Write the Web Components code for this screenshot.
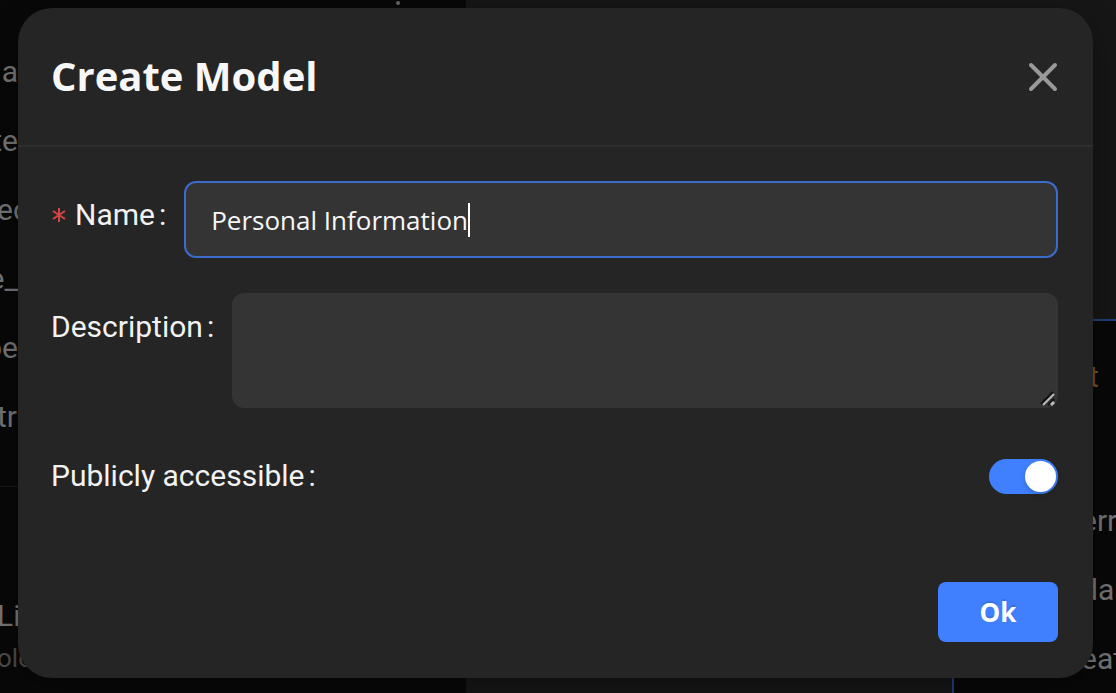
<!DOCTYPE html>
<html lang="en">
<head>
<meta charset="utf-8">
<meta name="viewport" content="width=device-width, initial-scale=1">
<title>Create Model</title>
<style>
  html, body { margin: 0; min-height: 100%; background: #080808; color: #f2f2f2; font-family: Roboto, "Liberation Sans", sans-serif; overflow: hidden; }
</style>
</head>
<body>
<model-page></model-page>

<template id="page-tpl">
  <style>
    :host { display: block; position: relative; overflow: hidden; min-height: 100vh; box-sizing: border-box; padding: 8px 23px 15px 18px; }
    page-backdrop { position: absolute; inset: 0; }
    modal-dialog { position: relative; }
  </style>
  <page-backdrop></page-backdrop>
  <modal-dialog heading="Create Model">
    <text-field label="Name" value="Personal Information"></text-field>
    <area-field label="Description"></area-field>
    <switch-field label="Publicly accessible"></switch-field>
    <primary-button slot="footer">Ok</primary-button>
  </modal-dialog>
</template>

<template id="backdrop-tpl">
  <style>
    :host { display: grid; grid-template-columns: 466px 1fr; background: #161616; font-size: 30px; line-height: 36px; color: #747474; overflow: hidden; }
    aside { background: #080808; display: flex; flex-direction: column; overflow: hidden; }
    .dot { width: 4px; height: 4px; border-radius: 50%; background: #666; margin-left: 396px; margin-top: 1px; }
    ul { list-style: none; margin: 0 0 0 -3px; padding: 49px 0 0; display: flex; flex-direction: column; gap: 33px; }
    li { display: flex; width: 21px; white-space: nowrap; }
    li.end { justify-content: flex-end; }
    .rest { margin-top: 51px; border-top: 1px solid #1a1a1a; padding-top: 111px; }
    .rest div { white-space: nowrap; margin-left: -3px; }
    .rest .sub { font-size: 26px; color: #4b4b4b; margin-top: 6px; }
    main { display: flex; justify-content: flex-end; padding-top: 319px; }
    section { box-sizing: border-box; width: 164px; background: #080808; border: 2px solid #223d78; border-right: 0; border-bottom: 0; padding: 38px 0 0 127px; }
    section div { white-space: nowrap; margin-bottom: 33px; }
    section .type { color: #735018; padding-left: 8px; margin-bottom: 108px; }
  </style>
  <aside>
    <div class="dot"></div>
    <ul>
      <li class="end">a</li>
      <li class="end">te</li>
      <li>ec</li>
      <li class="end">e_</li>
      <li class="end">pe</li>
      <li>tra</li>
    </ul>
    <div class="rest">
      <div>Li</div>
      <div class="sub">olo</div>
    </div>
  </aside>
  <main>
    <section>
      <div class="type">t</div>
      <div>err</div>
      <div>da</div>
      <div>eat</div>
    </section>
  </main>
</template>

<template id="dialog-tpl">
  <style>
    :host { display: block; background: #252525; border-radius: 34px; box-shadow: 0 10px 30px rgba(0,0,0,.3); }
    header { display: flex; justify-content: space-between; align-items: center; height: 137px; padding: 0 34px 0 33px; border-bottom: 2px solid #2f2f2f; box-sizing: content-box; }
    h1 { margin: 0; padding-bottom: 2px; font: 700 40px/56px "Open Sans", "Noto Sans", sans-serif; color: #f7f7f7; }
    button { border: 0; padding: 0; background: none; display: flex; }
    svg { width: 32px; height: 32px; display: block; }
    .body { display: flex; flex-direction: column; padding: 34px 35px 0 33px; }
    footer { display: flex; justify-content: flex-end; padding: 88px 35px 36px; }
  </style>
  <header>
    <h1></h1>
    <button type="button" aria-label="Close">
      <svg viewBox="0 0 32 32"><path d="M4 4L28 28M28 4L4 28" fill="none" stroke="#999" stroke-width="4" stroke-linecap="round"/></svg>
    </button>
  </header>
  <div class="body"><slot></slot></div>
  <footer><slot name="footer"></slot></footer>
</template>

<template id="text-tpl">
  <style>
    :host { display: flex; align-items: flex-start; gap: 18px; margin-bottom: 35px; }
    label { display: flex; align-items: center; gap: 8px; font-size: 30px; line-height: 36px; padding-top: 16px; white-space: nowrap; }
    label svg { width: 16px; height: 16px; }
    .colon { margin-left: -4px; }
    .box { flex: 1; min-width: 0; box-sizing: border-box; height: 77px; display: flex; align-items: center; background: #343434; border: 2px solid #3b6bcb; border-radius: 12px; padding: 0 25px; }
    input { field-sizing: content; background: none; border: 0; padding: 0; margin: 0; outline: 0; color: #f7f7f7; font: 26px/36px "Open Sans", "Noto Sans", sans-serif; }
    .caret { width: 2px; height: 34px; background: #fff; }
  </style>
  <label for="f">
    <svg viewBox="0 0 16 16" aria-hidden="true"><path d="M8 1V15M2 4L14 12M14 4L2 12" stroke="#d64545" stroke-width="2" fill="none"/></svg>
    <span class="name"></span><span class="colon">:</span>
  </label>
  <div class="box"><input id="f" type="text" required><span class="caret"></span></div>
</template>

<template id="area-tpl">
  <style>
    :host { display: flex; align-items: flex-start; gap: 18px; margin-bottom: 50px; }
    label { display: flex; gap: 4px; font-size: 30px; line-height: 36px; padding-top: 16px; white-space: nowrap; }
    .box { flex: 1; min-width: 0; position: relative; display: flex; }
    textarea { flex: 1; min-width: 0; box-sizing: border-box; height: 115px; resize: none; background: #343434; border: 0; border-radius: 12px; padding: 16px 25px; margin: 0; outline: 0; color: #f7f7f7; font: 26px/36px "Open Sans", "Noto Sans", sans-serif; }
    svg { position: absolute; right: 2px; bottom: 1px; width: 16px; height: 16px; }
  </style>
  <label for="f"><span class="name"></span><span>:</span></label>
  <div class="box">
    <textarea id="f"></textarea>
    <svg viewBox="0 0 16 16" aria-hidden="true">
      <path d="M1 13L13 1M8 14L14 8" stroke="#111" stroke-width="2"/>
      <path d="M3 14L14 3" stroke="#bbb" stroke-width="2"/>
      <path d="M11 14L14 11" stroke="#bbb" stroke-width="3"/>
    </svg>
  </div>
</template>

<template id="switch-tpl">
  <style>
    :host { display: flex; align-items: center; justify-content: space-between; }
    label { display: flex; gap: 4px; font-size: 30px; line-height: 36px; white-space: nowrap; }
    input { appearance: none; margin: 0; width: 69px; height: 35px; border-radius: 18px; background: #666; display: flex; align-items: center; padding: 0 2px; box-sizing: border-box; }
    input::before { content: ""; width: 31px; height: 31px; border-radius: 50%; background: #fff; box-shadow: 0 3px 6px rgba(0,35,11,.2); }
    input:checked { background: #4080ff; justify-content: flex-end; }
  </style>
  <label for="f"><span class="name"></span><span>:</span></label>
  <input id="f" type="checkbox" role="switch" checked>
</template>

<template id="button-tpl">
  <style>
    :host { display: block; }
    button { width: 120px; height: 60px; border: 0; border-radius: 8px; background: #4080ff; color: #fff; font: 700 26px/36px "Open Sans", "Noto Sans", sans-serif; text-shadow: 0 -2px 0 rgba(0,0,0,.12); padding: 0; }
  </style>
  <button type="submit"><slot></slot></button>
</template>

<script>
  class Base extends HTMLElement {
    constructor() {
      super();
      const tpl = document.getElementById(this.constructor.tpl);
      this.attachShadow({ mode: "open" }).append(document.importNode(tpl.content, true));
    }
  }
  class Field extends Base {
    connectedCallback() {
      this.shadowRoot.querySelector(".name").textContent = this.getAttribute("label");
      if (this.hasAttribute("value")) this.shadowRoot.querySelector("input").value = this.getAttribute("value");
    }
  }
  customElements.define("page-backdrop", class extends Base { static tpl = "backdrop-tpl"; });
  customElements.define("modal-dialog", class extends Base {
    static tpl = "dialog-tpl";
    connectedCallback() {
      this.setAttribute("role", "dialog");
      this.shadowRoot.querySelector("h1").textContent = this.getAttribute("heading");
    }
  });
  customElements.define("text-field", class extends Field { static tpl = "text-tpl"; });
  customElements.define("area-field", class extends Field { static tpl = "area-tpl"; });
  customElements.define("switch-field", class extends Field { static tpl = "switch-tpl"; });
  customElements.define("primary-button", class extends Base { static tpl = "button-tpl"; });
  customElements.define("model-page", class extends Base { static tpl = "page-tpl"; });
</script>
</body>
</html>
